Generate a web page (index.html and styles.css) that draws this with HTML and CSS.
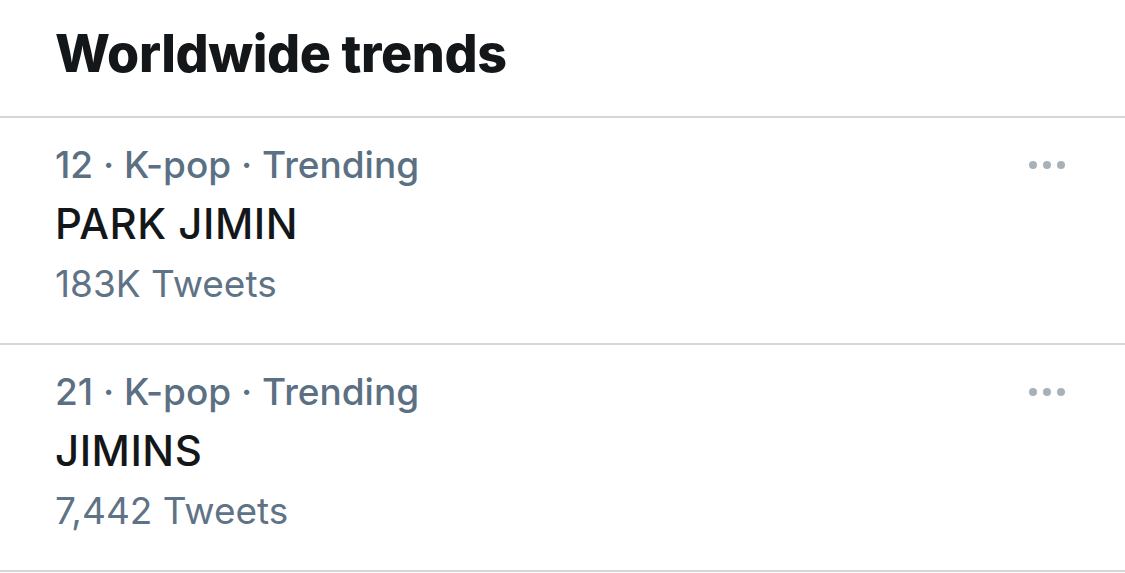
FILE: index.html
```html
<!DOCTYPE html>
<html lang="en">
<head>
<meta charset="utf-8">
<title>Worldwide trends</title>
<link rel="stylesheet" href="styles.css">
</head>
<body>
<main class="panel">
  <header class="panel-header">
    <h1 class="panel-title">Worldwide trends</h1>
  </header>
  <ul class="trend-list">
    <li class="trend">
      <div class="trend-body">
        <div class="trend-meta">12 · K-pop · Trending</div>
        <div class="trend-name">PARK JIMIN</div>
        <div class="trend-count">183K Tweets</div>
      </div>
      <button class="trend-more" aria-label="More">
        <svg width="38" height="8" viewBox="0 0 38 8"><circle cx="4" cy="4" r="4"/><circle cx="18" cy="4" r="4"/><circle cx="32" cy="4" r="4"/></svg>
      </button>
    </li>
    <li class="trend">
      <div class="trend-body">
        <div class="trend-meta">21 · K-pop · Trending</div>
        <div class="trend-name">JIMINS</div>
        <div class="trend-count">7,442 Tweets</div>
      </div>
      <button class="trend-more" aria-label="More">
        <svg width="38" height="8" viewBox="0 0 38 8"><circle cx="4" cy="4" r="4"/><circle cx="18" cy="4" r="4"/><circle cx="32" cy="4" r="4"/></svg>
      </button>
    </li>
  </ul>
</main>
</body>
</html>
```
FILE: styles.css
```css
* { box-sizing: border-box; }
html, body {
  margin: 0;
  padding: 0;
  background: #ffffff;
}
body {
  font-family: Inter, "Liberation Sans", Arial, sans-serif;
  color: #14171a;
  width: 1125px;
  height: 573px;
  overflow: hidden;
}
.panel {
  display: flex;
  flex-direction: column;
}
.panel-header {
  padding: 0 55px 8px;
  border-bottom: 2px solid #d3d6da;
}
.panel-title {
  margin: 0;
  font-size: 52px;
  font-weight: 800;
  line-height: 108px;
  letter-spacing: -0.4px;
  color: #14171a;
}
.trend-list {
  list-style: none;
  margin: 0;
  padding: 0;
}
.trend {
  display: flex;
  align-items: flex-start;
  justify-content: space-between;
  padding: 17px 58px 29px 55px;
  border-bottom: 2px solid #d3d6da;
  height: 227px;
}
.trend-body {
  display: flex;
  flex-direction: column;
}
.trend-meta {
  font-size: 37px;
  font-weight: 500;
  line-height: 60px;
  color: #5b7083;
}
.trend-name {
  font-size: 42px;
  font-weight: 500;
  line-height: 58px;
  letter-spacing: 0.5px;
  color: #14171a;
}
.trend-count {
  font-size: 37px;
  font-weight: 400;
  line-height: 61px;
  color: #5f7386;
}
.trend-more {
  border: 0;
  background: none;
  padding: 0;
  height: 60px;
  display: flex;
  align-items: center;
  fill: #a9b0b8;
  cursor: pointer;
}
```
